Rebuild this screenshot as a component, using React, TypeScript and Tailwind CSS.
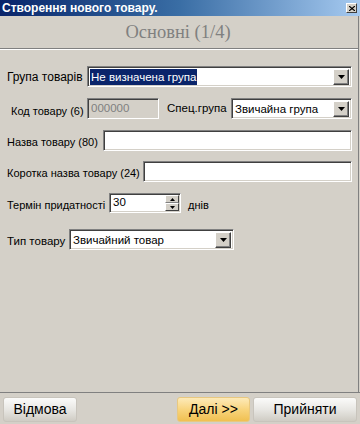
const sunken =
  'border border-t-[#808080] border-l-[#808080] border-b-white border-r-white shadow-[inset_1px_1px_0_#404040,inset_-1px_-1px_0_#d4d0c8]';

function DropButton() {
  return (
    <div className="w-[16px] h-[16px] shrink-0 flex items-center justify-center bg-[#d4d0c8] border border-t-white border-l-white border-b-[#404040] border-r-[#404040] shadow-[inset_-1px_-1px_0_#808080]">
      <svg width="7" height="4" viewBox="0 0 7 4">
        <path d="M0 0h7L3.5 4z" fill="#000" />
      </svg>
    </div>
  );
}

function Select({ width, text, selected }: { width: number; text: string; selected?: boolean }) {
  return (
    <div
      className={`${sunken} bg-white h-[21px] shrink-0 flex items-center justify-between pl-[2px] pr-[2px]`}
      style={{ width }}
    >
      <span
        className={`text-[11.5px] leading-[16px] px-[1px] whitespace-nowrap ${
          selected ? 'bg-[#0a246a] text-white' : 'text-black'
        }`}
      >
        {text}
      </span>
      <DropButton />
    </div>
  );
}

function Input({ width, text, disabled }: { width: number; text?: string; disabled?: boolean }) {
  return (
    <div
      className={`${sunken} h-[21px] shrink-0 flex items-center pl-[3px] text-[11.5px] ${
        disabled ? 'bg-[#d4d0c8] text-[#808080]' : 'bg-white text-black'
      }`}
      style={{ width }}
    >
      {text}
    </div>
  );
}

function Button({ label, primary, width }: { label: string; primary?: boolean; width: number }) {
  return (
    <div
      className={`h-[25px] rounded-[3px] flex items-center justify-center text-[14px] text-black border ${
        primary
          ? 'border-[#e8c880] bg-gradient-to-b from-[#fdeab8] via-[#f8d47c] to-[#f0c050]'
          : 'border-[#c8c4bc] bg-gradient-to-b from-[#fbfbfa] via-[#e8e7e3] to-[#cfccc4]'
      }`}
      style={{ width }}
    >
      {label}
    </div>
  );
}

export default function App() {
  return (
    <div
      className="w-[360px] h-[424px] bg-[#d4d0c8] flex flex-col overflow-hidden"
      style={{ fontFamily: '"Liberation Sans", Arial, sans-serif' }}
    >
      {/* title bar */}
      <div className="h-[16px] flex items-center justify-between bg-gradient-to-r from-[#0a246a] via-[#3a6ea5] to-[#a6caf0] pl-[2px] pr-[3px]">
        <span className="text-white font-bold text-[12px] leading-none">Створення нового товару.</span>
        <div className="w-[11px] h-[10px] bg-[#d4d0c8] border border-t-white border-l-white border-b-[#404040] border-r-[#404040] flex items-center justify-center">
          <svg width="6" height="5" viewBox="0 0 6 5">
            <path d="M0 0L6 5M6 0L0 5" stroke="#000" strokeWidth="1.2" />
          </svg>
        </div>
      </div>

      <div className="flex-1 w-[359px] border-r border-[#808080] flex flex-col">
        {/* step header */}
        <div className="h-[32px] flex items-center justify-center pr-[2px]">
          <span
            className="text-[#808080] text-[18.5px] leading-none"
            style={{ fontFamily: '"Liberation Serif", "Times New Roman", serif' }}
          >
            Основні (1/4)
          </span>
        </div>
        <div className="h-[2px] border-t border-[#808080] border-b border-b-white" />

        <div className="flex flex-col text-[11px] text-black whitespace-nowrap">
          <div className="flex items-end mt-[16px] h-[21px]">
            <span className="pl-[7px] w-[87px] shrink-0 pb-[1px] text-[12px]">Група товарів</span>
            <Select width={265} text="Не визначена група" selected />
          </div>

          <div className="flex items-center mt-[11px] h-[21px]">
            <span className="pl-[11px] w-[87px] shrink-0 pt-[6px]">Код товару (6)</span>
            <Input width={72} text="000000" disabled />
            <span className="ml-[8px] w-[64px] shrink-0 text-[11.5px]">Спец.група</span>
            <Select width={121} text="Звичайна група" />
          </div>

          <div className="flex items-end mt-[11px] h-[21px]">
            <span className="pl-[7px] w-[103px] shrink-0 pb-[1px]">Назва товару (80)</span>
            <Input width={249} />
          </div>

          <div className="flex items-end mt-[10px] h-[21px]">
            <span className="pl-[7px] w-[143px] shrink-0 pb-[1px]">Коротка назва товару (24)</span>
            <Input width={209} />
          </div>

          <div className="flex items-end mt-[11px] h-[20px]">
            <span className="pl-[7px] w-[109px] shrink-0">Термін придатності</span>
            <div
              className={`${sunken} bg-white w-[72px] h-[20px] shrink-0 flex items-start justify-between pl-[3px] pr-[1px] pt-[1px] text-[11.5px]`}
            >
              <span className="leading-[14px]">30</span>
              <div className="flex flex-col">
                <div className="w-[14px] h-[8px] bg-[#d4d0c8] border border-t-white border-l-white border-b-[#808080] border-r-[#404040] flex items-center justify-center">
                  <svg width="5" height="3" viewBox="0 0 5 3">
                    <path d="M2.5 0L5 3H0z" fill="#000" />
                  </svg>
                </div>
                <div className="w-[14px] h-[8px] bg-[#d4d0c8] border border-t-white border-l-white border-b-[#404040] border-r-[#404040] flex items-center justify-center">
                  <svg width="5" height="3" viewBox="0 0 5 3">
                    <path d="M0 0h5L2.5 3z" fill="#000" />
                  </svg>
                </div>
              </div>
            </div>
            <span className="ml-[7px]">днів</span>
          </div>

          <div className="flex items-end mt-[16px] h-[21px]">
            <span className="pl-[7px] w-[69px] shrink-0 text-[11.5px]">Тип товару</span>
            <Select width={165} text="Звичайний товар" />
          </div>
        </div>
      </div>

      {/* footer */}
      <div className="h-[32px] border-t border-[#808080] flex items-start pt-[4px] px-[3px]">
        <Button label="Відмова" width={74} />
        <div className="flex-1" />
        <Button label="Далі >>" primary width={73} />
        <div className="w-[3px]" />
        <Button label="Прийняти" width={104} />
      </div>
    </div>
  );
}
